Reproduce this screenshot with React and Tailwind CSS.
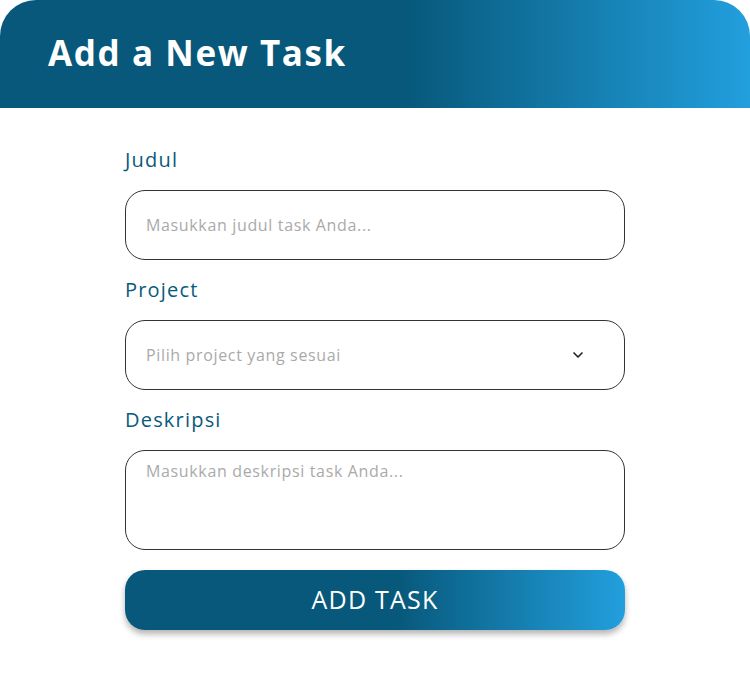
import React from 'react';

function Field({ label, children }) {
  return (
    <div className="flex flex-col gap-[15px]">
      <label className="h-[30px] flex items-center text-[20px] tracking-[1.2px] text-[#085a7c]">{label}</label>
      {children}
    </div>
  );
}

export default function App() {
  return (
    <div className="w-[750px] h-[675px] bg-white font-['Open_Sans',sans-serif]">
      <div className="h-[108px] rounded-t-[36px] bg-[linear-gradient(to_right,#07587a_0%,#07587a_54%,#229fdd_100%)] flex items-center px-[48px] pb-[2px]">
        <h1 className="text-[35px] font-bold text-white tracking-[1.6px]">Add a New Task</h1>
      </div>
      <form className="w-[500px] mx-auto pt-[37px] flex flex-col gap-[15px]">
        <Field label="Judul">
          <input
            type="text"
            placeholder="Masukkan judul task Anda..."
            className="h-[70px] w-full rounded-[20px] border border-[#333] px-[20px] text-[16px] tracking-[0.65px] text-[#333] placeholder:text-[#aaa] outline-none"
          />
        </Field>
        <Field label="Project">
          <div className="relative h-[70px] w-full rounded-[20px] border border-[#333] px-[20px] flex items-center">
            <span className="text-[16px] tracking-[0.65px] text-[#aaa]">Pilih project yang sesuai</span>
            <svg className="absolute right-[38px] top-1/2 -translate-y-1/2" width="16" height="16" viewBox="0 0 24 24" fill="none" stroke="#222" strokeWidth="2.5" strokeLinecap="round" strokeLinejoin="round">
              <path d="M6 9l6 6 6-6" />
            </svg>
          </div>
        </Field>
        <Field label="Deskripsi">
          <textarea
            placeholder="Masukkan deskripsi task Anda..."
            className="h-[100px] w-full resize-none rounded-[20px] border border-[#333] px-[20px] pt-[8px] text-[16px] tracking-[0.65px] text-[#333] placeholder:text-[#aaa] outline-none"
          />
        </Field>
        <button
          type="button"
          className="mt-[5px] h-[60px] w-full rounded-[20px] bg-[linear-gradient(to_right,#07587a_0%,#07587a_54%,#229fdd_100%)] text-white text-[25px] tracking-[1.2px] shadow-[0_4px_6px_rgba(0,0,0,0.3)]"
        >
          ADD TASK
        </button>
      </form>
    </div>
  );
}
